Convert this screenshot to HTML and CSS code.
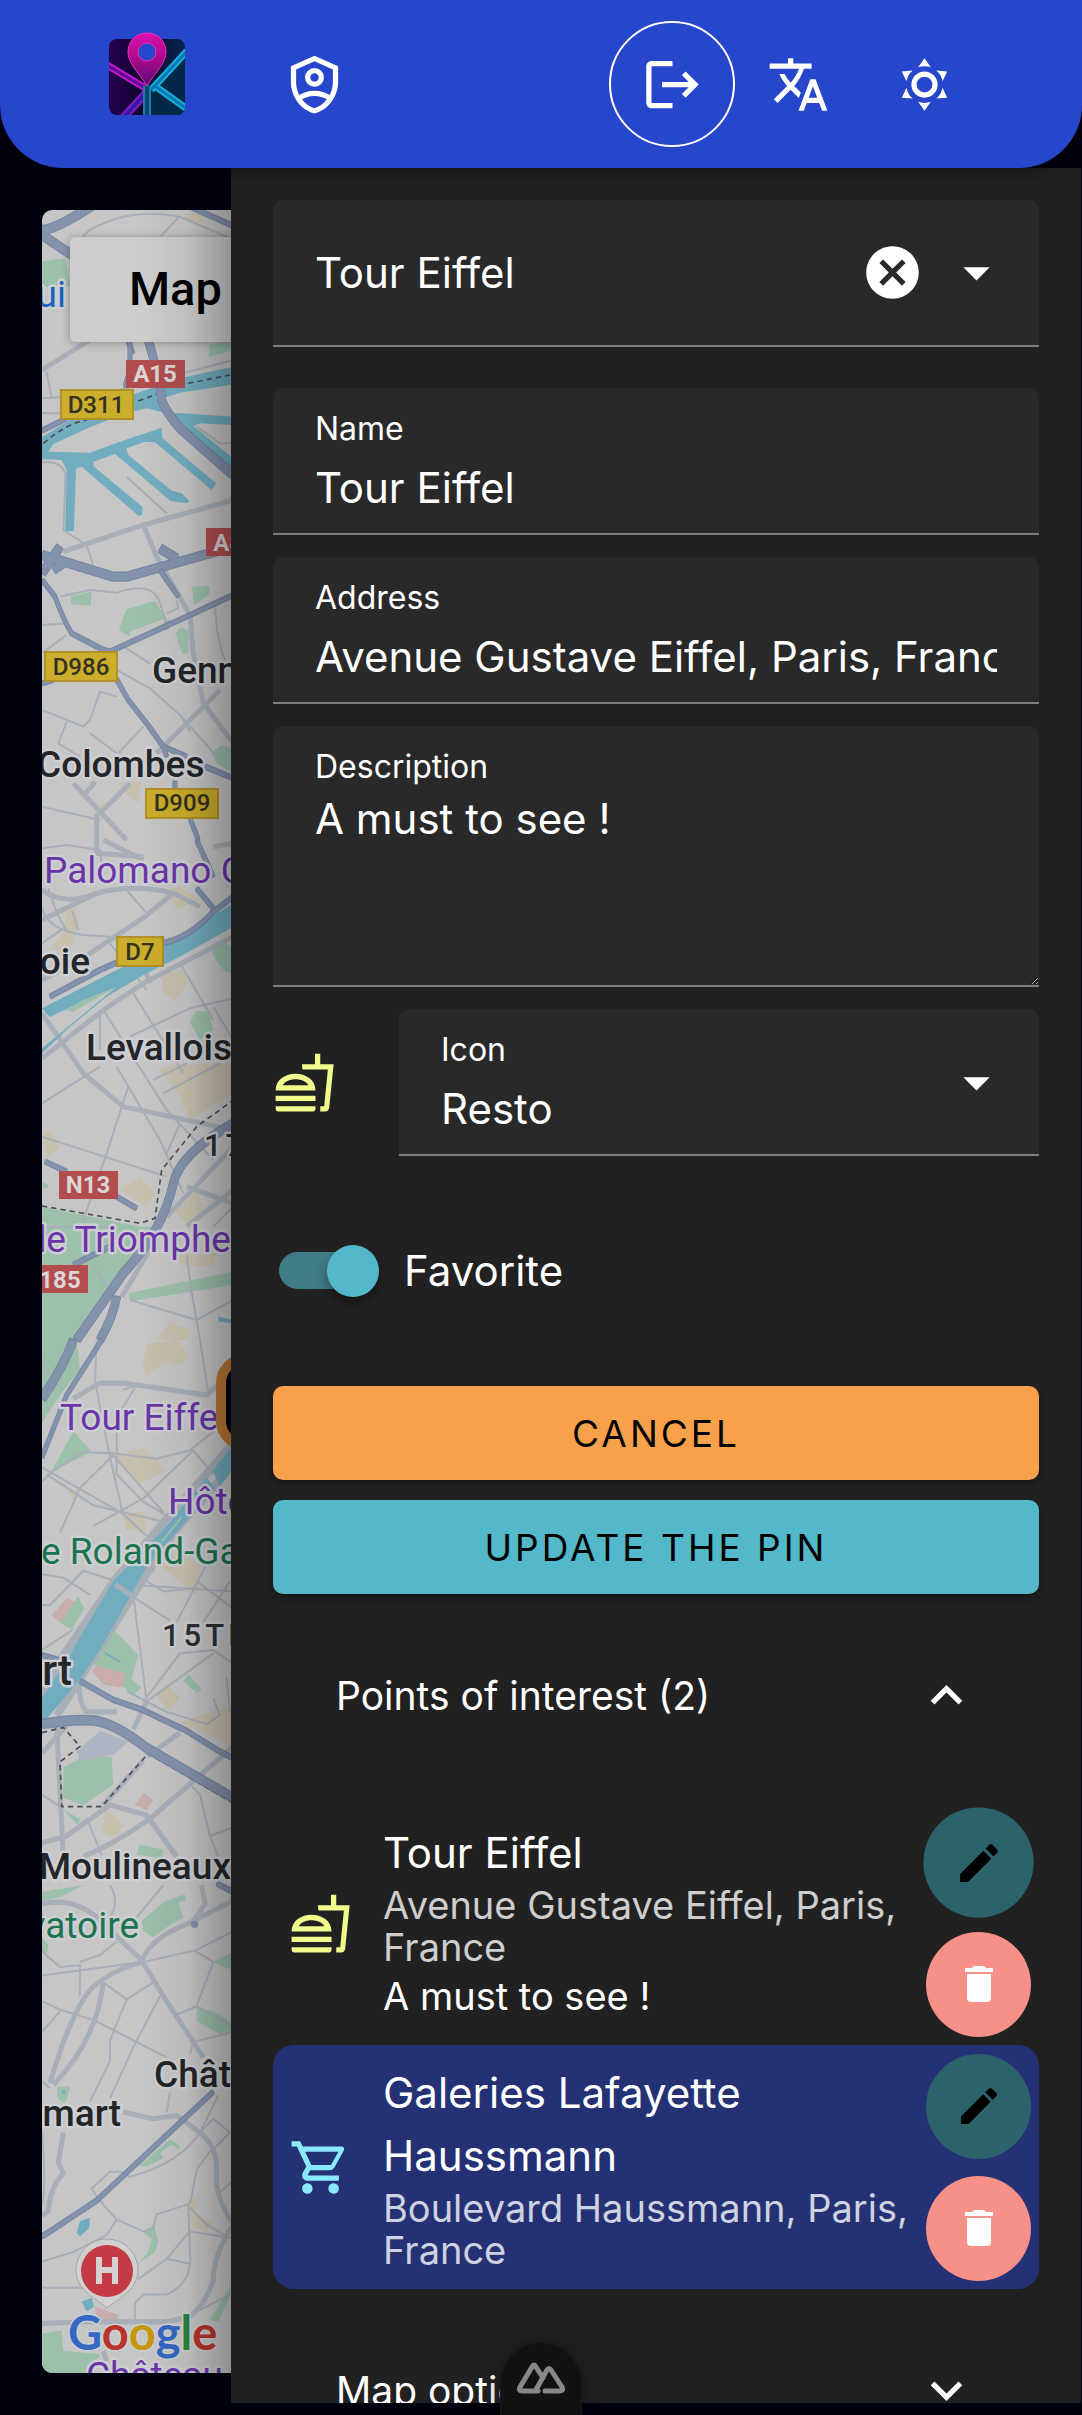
FILE: index.html
```html
<!DOCTYPE html>
<html lang="en">
<head>
<meta charset="utf-8">
<meta name="viewport" content="width=device-width, initial-scale=1">
<title>Map pins</title>
<link rel="stylesheet" href="styles.css">
</head>
<body>
<svg class="defs" aria-hidden="true">
  <symbol id="i-food" viewBox="0 0 24 24"><path d="M16 1H18V5H23.1L21.4 21.6C21.3 22.5 20.7 23 20 23H18V21H19.5L20.9 7H11.2L11 5H16ZM1 21H16.2V22C16.2 22.6 15.8 23 15.2 23H2C1.4 23 1 22.6 1 22ZM1 17H16.2V19H1ZM8.6 8.7C4.8 8.7 1 10.9 1 15H16.2C16.2 10.9 12.4 8.7 8.6 8.7ZM3.7 13C4.6 11.6 6.6 10.8 8.6 10.8S12.6 11.6 13.5 13Z"/></symbol>
  <symbol id="i-cart" viewBox="0 0 24 24"><path d="M17 18A2 2 0 0 1 19 20 2 2 0 0 1 17 22C15.89 22 15 21.1 15 20C15 18.89 15.89 18 17 18M1 2H4.27L5.21 4H20A1 1 0 0 1 21 5C21 5.17 20.95 5.34 20.88 5.5L17.3 11.97C16.96 12.58 16.3 13 15.55 13H8.1L7.2 14.63L7.17 14.75A.25 .25 0 0 0 7.42 15H19V17H7C5.89 17 5 16.1 5 15C5 14.65 5.09 14.32 5.24 14.04L6.6 11.59L3 4H1V2M7 18A2 2 0 0 1 9 20 2 2 0 0 1 7 22C5.89 22 5 21.1 5 20C5 18.89 5.89 18 7 18M16 11L18.78 6H6.14L8.5 11H16Z"/></symbol>
  <symbol id="i-down" viewBox="0 0 24 24"><path d="M7 10L12 15L17 10H7Z"/></symbol>
  <symbol id="i-pencil" viewBox="0 0 24 24"><path d="M20.71 7.04C21.1 6.65 21.1 6 20.71 5.63L18.37 3.29C18 2.9 17.35 2.9 16.96 3.29L15.12 5.12L18.87 8.87M3 17.25V21H6.75L17.81 9.93L14.06 6.18L3 17.25Z"/></symbol>
  <symbol id="i-trash" viewBox="0 0 24 24"><path d="M19 4H15.5L14.5 3H9.5L8.5 4H5V6H19M6 19A2 2 0 0 0 8 21H16A2 2 0 0 0 18 19V7H6V19Z"/></symbol>
</svg>

<header class="topbar">
  <nav class="topbar-side" aria-label="Main">
    <a class="logo" href="#" aria-label="Home">
      <svg viewBox="0 0 76 84" width="76" height="84">
        <defs>
          <clipPath id="tile"><rect y="7" width="76" height="76" rx="8"/></clipPath>
          <linearGradient id="dark" x1="0" x2="1"><stop offset="0" stop-color="#22004f"/><stop offset=".45" stop-color="#12032e"/><stop offset="1" stop-color="#03284d"/></linearGradient>
          <linearGradient id="pin" x1="0" y1="0" x2="0" y2="1"><stop offset="0" stop-color="#dc0fae"/><stop offset=".5" stop-color="#a80a88"/><stop offset="1" stop-color="#560a78"/></linearGradient>
        </defs>
        <g clip-path="url(#tile)" fill="none">
          <rect y="7" width="76" height="76" fill="url(#dark)"/>
          <path d="M38 55L76 19V83H38Z" fill="#02284a"/>
          <path d="M-2 33L38 57" stroke="#c414cf" stroke-width="7"/><path d="M-2 33L38 57" stroke="#5b0c8e" stroke-width="3"/>
          <path d="M38 60L14 86" stroke="#8a17d0" stroke-width="8"/><path d="M38 60L14 86" stroke="#301aa0" stroke-width="4"/>
          <path d="M42 58L78 19M46 54L78 77" stroke="#14b4da" stroke-width="7"/><path d="M42 58L78 19M46 54L78 77" stroke="#0876b4" stroke-width="3"/>
          <path d="M38 54V84" stroke="#1681aa" stroke-width="8"/><path d="M38 52V84" stroke="#114773" stroke-width="4"/>
        </g>
        <path fill="url(#pin)" stroke="#e831bd" d="M38 1C27 1 19 9 19 20C19 31 28 38 38 54C48 38 57 31 57 20C57 9 49 1 38 1Z"/>
        <circle cx="38" cy="20" r="9" fill="#2646cc" stroke="#e831bd"/>
      </svg>
    </a>
    <a class="icon-btn" href="#" aria-label="Admin">
      <svg class="icon" viewBox="0 0 24 24"><path d="M21 11C21 16.55 17.16 21.74 12 23C6.84 21.74 3 16.55 3 11V5L12 1L21 5V11M12 21C15.75 20 19 15.54 19 11.22V6.3L12 3.18L5 6.3V11.22C5 15.54 8.25 20 12 21Z"/><g fill="none" stroke="currentColor" stroke-width="2"><circle cx="12" cy="9.3" r="2.6"/><path d="M6 17.3C9.5 14.7 14.5 14.7 18 17.3"/></g></svg>
    </a>
  </nav>
  <div class="topbar-side">
    <button class="icon-btn ringed" type="button" aria-label="Log out"><svg class="icon" viewBox="0 0 24 24"><path d="M17 7L15.59 8.41L18.17 11H8V13H18.17L15.59 15.58L17 17L22 12M4 5H12V3H4C2.9 3 2 3.9 2 5V19C2 20.1 2.9 21 4 21H12V19H4V5Z"/></svg></button>
    <button class="icon-btn" type="button" aria-label="Language"><svg class="icon" viewBox="0 0 24 24"><path d="M12.87 15.07L10.33 12.56L10.36 12.53C12.1 10.59 13.34 8.36 14.07 6H17V4H10V2H8V4H1V6H12.17C11.5 7.92 10.44 9.75 9 11.35C8.07 10.32 7.3 9.19 6.69 8H4.69C5.42 9.63 6.42 11.17 7.67 12.56L2.58 17.58L4 19L9 14L12.11 17.11L12.87 15.07M18.5 10H16.5L12 22H14L15.12 19H19.87L21 22H23L18.5 10M15.88 17L17.5 12.67L19.12 17H15.88Z"/></svg></button>
    <button class="icon-btn" type="button" aria-label="Theme"><svg class="icon" viewBox="0 0 24 24"><path d="M12 7A5 5 0 0 1 17 12A5 5 0 0 1 12 17A5 5 0 0 1 7 12A5 5 0 0 1 12 7M12 9A3 3 0 0 0 9 12A3 3 0 0 0 12 15A3 3 0 0 0 15 12A3 3 0 0 0 12 9M12 2L14.39 5.42C13.65 5.15 12.84 5 12 5C11.16 5 10.35 5.15 9.61 5.42L12 2M3.34 7L7.5 6.65C6.9 7.16 6.36 7.78 5.94 8.5C5.5 9.24 5.25 10 5.11 10.79L3.34 7M3.36 17L5.12 13.23C5.26 14 5.53 14.78 5.95 15.5C6.37 16.24 6.91 16.86 7.5 17.37L3.36 17M20.65 7L18.88 10.79C18.74 10 18.47 9.23 18.05 8.5C17.63 7.78 17.1 7.15 16.5 6.64L20.65 7M20.64 17L16.5 17.36C17.09 16.85 17.62 16.22 18.04 15.5C18.46 14.77 18.73 14 18.87 13.21L20.64 17M12 22L9.59 18.56C10.33 18.83 11.14 19 12 19C12.82 19 13.63 18.83 14.37 18.56L12 22Z"/></svg></button>
  </div>
</header>

<main class="layout">
  <section class="map" aria-label="Map">
    <svg class="map-art" viewBox="42 210 189 2163" preserveAspectRatio="xMinYMin slice">
      <!-- north -->
      <g transform="scale(.345 .3333)">
        <path class="park" d="M120 785L190 775L205 860H120ZM605 1045L680 1025V1050L605 1070Z"/>
        <path class="shop" d="M540 640H610L570 675L535 655Z"/>
        <path class="rd" d="M230 720L260 690Q380 620 520 650L680 720M520 650L465 710M200 1060L300 1000"/>
        <path class="hw" d="M100 690L215 770M120 690Q160 690 270 615"/>
        <path class="hw2" d="M550 620L680 680M370 1020L385 1060M430 1020L445 1060"/>
      </g>
      <g transform="translate(0 340) scale(.3333)">
        <path class="park" d="M378 808L466 782L496 835L392 874L388 888L357 872ZM213 768L275 755L272 798L213 793ZM574 740L629 738L627 765L582 795L578 755ZM526 880L543 862L566 870L565 938L548 945ZM635 1240L665 1215L700 1225V1300L650 1270ZM627 15L700 0V30L630 40Z"/>
        <path class="shop" d="M280 1400L320 1385L300 1430ZM355 1330L425 1325L415 1390L395 1380Z"/>
        <path class="rd" d="M126 175L300 165L700 60M126 220H180M140 95L155 175M126 367Q180 360 197 400L190 570L260 615L280 675M380 410L500 520M590 260L660 310H700M180 770L270 750L350 758Q460 720 480 790L500 850M500 820L535 805L530 780M126 855L205 850M126 940L200 885M645 795Q650 900 675 960M370 920L450 970M350 990L450 1045L540 1125L660 1260M540 1125L570 1175M126 1110L250 1160L270 1140L300 1055L350 1070M270 1180L350 1240M200 1145L175 1210L240 1250M126 1400L300 1440M355 1240L430 1160"/>
        <path class="rd2" d="M126 90L270 0M190 635L430 555L700 480M430 555L470 650L570 825L580 940L610 1090L700 1210M470 1240L660 1050M220 1330L380 1500M250 1370L285 1325M300 1420L390 1330M290 1420V1500M500 840V870"/>
        <path class="water" d="M126 290L260 210L410 160L540 115L700 80V133L540 158L490 175L520 218L700 230V255L600 250L580 258L700 355V388L560 270L520 225L440 205L370 222L270 262L160 312L145 335L270 338L375 300L484 264L488 295L648 430L635 450L465 307L435 305L380 325L385 345L515 452L545 460L568 482L562 490L512 483L345 342L280 365L280 378L427 500V525L415 527L245 380L228 385L222 573H196L200 390L185 360L126 357Z"/>
        <path class="dash" d="M130 310Q200 250 260 240M415 183L490 155M565 130L690 105"/>
        <path class="hw" d="M445 0Q480 120 485 180Q500 220 540 265L705 410"/>
        <path class="hw" d="M126 645L340 710H380L700 620M126 700L180 620M160 690L190 670M480 625L530 655"/>
        <path class="hw2" d="M390 0V90L375 140M126 272L200 235M126 720L165 770Q190 840 215 880L310 930L330 935L560 830L700 765M345 1010L385 1080L440 1150L490 1220L560 1250M490 1220L500 1250M615 1280L700 1315M525 1325V1345M570 1435L595 1500M480 690L535 770M126 1030L160 1020"/>
      </g>
      <!-- Seine and the western suburbs -->
      <g transform="translate(0 840) scale(.3333)">
        <path class="park" d="M126 1100L420 1160L470 1160L370 1300L240 1500H126ZM628 320L660 300L695 320V400L675 395L650 365ZM570 545L590 512L625 515L640 570L600 600ZM190 510L410 395L350 440L220 515ZM385 1360L700 1295V1335L390 1385ZM126 1025L145 1035V1045H126Z"/>
        <path class="shop" d="M500 150L540 140L600 180L530 210ZM200 210L230 205L235 260L210 330L145 330L190 280ZM485 410L545 388L565 430L525 480L490 460ZM478 690L520 675L700 670V760L570 840L540 770ZM126 880L150 870L180 920L140 955ZM360 1050L420 1010L465 1060L440 1100ZM525 1115L590 1050L615 1110L560 1150ZM530 1245L650 1240L640 1280L540 1275ZM470 1500L510 1445L570 1470L560 1500Z"/>
        <path class="rd" d="M126 25L200 15L300 30L310 110M126 200Q140 270 250 285L330 290M215 210L235 270M145 145Q170 230 200 270M126 310L190 265M380 150L440 220M330 310L440 450M400 460L550 700M310 510L500 810L640 960M540 370L640 540M640 500L700 600M390 590L570 505L700 475M300 520V630M126 790L300 680M460 720L560 670M490 760L660 670M385 740L320 940L250 1140M350 680L480 900L550 1060M126 890L500 1010M500 940L540 850M126 1160H330M280 1280L320 1340M390 1380L590 1440L700 1380M590 1440L600 1500M560 1240Q570 1340 590 1440M640 1160L700 1100"/>
        <path class="rd2" d="M290 0V40L430 50M126 150Q190 200 290 160Q400 130 520 160L600 200M126 240L290 160M520 160L435 230L270 340M126 655L310 510L430 430L700 290M126 520L250 700L370 800L700 870M430 380L450 430M700 920L500 1130M700 1050L560 1160M365 1370L480 1180M560 1040L700 1090M430 60L310 0M640 20L700 10M126 420L270 340"/>
        <path class="water" d="M126 505L350 390L490 315L700 190V260L540 350L430 405L320 470L210 560L126 640V625L290 490L350 440L250 480L150 532ZM655 1430L700 1440V1450L655 1445Z"/>
        <path class="dash" d="M126 1098L420 1150L465 1135L485 990L590 860L700 780"/>
        <path class="hw" d="M700 850Q540 940 520 1030Q490 1170 370 1300L230 1500M350 1370Q340 1430 300 1500"/>
        <path class="hw2" d="M150 470L300 390L480 310Q560 300 640 215L700 170M590 145L640 205M590 0L640 110M135 965L200 995M340 1065L410 1105M220 1275L330 1220"/>
      </g>
      <g transform="translate(0 1340) scale(.3333 .3444)">
        <path class="park" d="M126 0H230L240 85L180 160L126 240ZM220 265L275 325L180 370L150 390ZM180 820L235 745L253 780L215 840ZM270 930L345 845L415 915L395 985L425 1010L400 1030ZM190 1240L250 1210H335L340 1290L250 1350L190 1330ZM190 1365L240 1390L235 1410ZM410 1495L420 1465L490 1480L485 1505ZM550 990L565 970L605 1015L590 1025Z"/>
        <path class="shop" d="M440 10L530 0L570 50L540 75L500 60L440 105L425 80ZM340 340L430 310L500 380L415 420ZM370 510L430 495L440 560L380 550ZM470 650L590 740L600 660L540 600ZM470 1030L500 1000L540 1040L500 1075ZM305 1430L320 1365L375 1410L340 1445ZM540 1110L700 1060V1180ZM205 440L240 430L220 470Z"/>
        <path d="M155 800L200 750L225 760L180 820ZM275 960L290 945L380 970L365 1010L310 1000ZM405 1350L430 1315L460 1335L440 1365Z" fill="#c9acac"/>
        <path d="M230 1195L300 1135L385 1165L340 1205L240 1220Z" fill="#adb4c4"/>
        <path class="rd" d="M126 55L150 110L190 145M290 0L285 120L330 340L370 510M370 145L410 130L360 210M600 0L625 155M126 410L160 380L250 325L350 330L470 345L570 320L700 220M126 370L370 505L440 570M140 390L280 480L500 530M180 560L240 430L340 335L490 500M350 200V390L430 470L500 510M580 320L430 460L280 540M580 320L640 390M126 680L190 690L270 740M126 770H150L250 670L380 710L700 730M400 740L440 1050M390 740L510 815M530 820L620 650M590 700L700 780M440 700L490 730L590 720M610 820L690 700M430 1050L540 910L640 900L700 940M440 1050L640 910M680 980L690 1080M380 1020L500 1080L620 1115L660 1090L640 1040M570 1290L600 1320L630 1440L655 1500M630 1440L700 1415M265 1400L305 1495M126 1320L180 1355M126 900L220 840"/>
        <path class="rd2" d="M220 170L300 125H370L620 160L700 90M240 960Q230 1050 260 1080L350 1080M170 1120L190 1500M126 1460L200 1440L330 1350L440 1380L530 1500M250 1500Q350 1460 450 1390L700 1180M126 1200L200 1120M440 1050L400 1130M440 1210L540 1140M430 1220L310 1350"/>
        <path d="M700 300L500 520L350 690L180 930L126 1040M720 340L520 560L400 740L170 1090" fill="none" stroke="#a9afb7" stroke-width="24"/>
        <path class="water" d="M638 380L700 305V370L660 425ZM620 400L645 430L500 590L440 660L300 900L240 985L140 1100H126V1040L180 960L340 700L500 540ZM315 905L365 935H355L315 912Z"/>
        <path d="M485 585L545 515" stroke="#9dc0ab" stroke-width="6"/>
        <path class="rd2" d="M345 710L400 745"/>
        <path class="dash" d="M126 1140L190 1125L240 1180L180 1225L185 1355H305L445 1200L700 1345"/>
        <path class="hw" d="M220 0Q190 80 126 170M126 1115Q220 1100 280 1105Q340 1110 440 1185L700 1330"/>
        <path class="hw2" d="M305 0L200 160L126 340M240 990L340 1045L430 1075L560 1135L660 1195L700 1215M126 915L180 930"/>
      </g>
      <!-- southern suburbs -->
      <g transform="translate(0 1880) scale(.3333 .3412)">
        <path class="park" d="M126 35L250 15L180 50L126 62ZM425 120L490 65L555 42L558 60L535 65L550 110L505 135L460 168L430 150ZM640 240L700 210V265L660 250ZM590 375L640 385L700 420V440L660 452L590 415ZM172 605H212L195 655L172 640ZM415 840L510 760L542 780L535 790L515 775L480 800L490 815L440 840ZM430 1035L462 1010L475 1060L465 1090L415 1125L445 1090L455 1050ZM126 1330L185 1320L190 1380L300 1390L270 1450H126ZM630 1290L690 1190V1220L655 1295ZM126 170L145 190L140 220L126 210Z"/>
        <path class="shop" d="M560 930L590 935L585 980L635 1000L630 1025L580 1020L570 960Z"/>
        <path d="M285 1250L355 1275L350 1300L290 1290Z" fill="#c9acac"/>
        <path class="rd" d="M330 15Q360 60 330 110M490 15L410 110M126 210L180 255L240 250V340M240 240L300 220L350 180M310 300L380 350L460 300M480 340L400 490L330 640M380 350L330 470V530L270 650M126 355L180 380L280 410L500 520M126 445L180 385M530 395L590 370L640 240L580 205M590 370L700 430M570 510L580 475L700 445M126 590L150 610M510 625L500 680M655 630L600 740Q540 830 390 870L360 855H330L275 905L300 940L350 995L430 1030L460 1020L470 980L565 950L570 1090Q580 1180 500 1215H430L405 1240V1290M350 995L320 1040L220 1090L126 1118M126 1195H250M570 960L620 1010L700 1055M570 1030L700 1050M700 880L655 920M415 1170L500 1110L570 1030M500 1110L570 1125M700 1210L600 1260M640 780L590 850L570 950M600 740L640 700L690 740M690 740L640 790M126 740Q140 900 126 950"/>
        <path class="rd" d="M126 280L430 240L590 205L700 150"/>
        <path class="rd2" d="M126 70Q220 50 290 110L425 235L490 340L610 520M425 240Q450 170 560 130L700 60M605 15L615 70L580 120M425 240Q290 280 250 350Q200 430 150 595M310 300Q290 470 160 600M190 740L175 830L190 860Q150 900 145 970L126 985M370 680L460 700L530 690L600 740Q650 780 650 850Q640 920 700 1010Q640 1100 640 1170Q620 1240 570 1280L500 1295H250L126 1300M310 1380L320 1410"/>
        <path class="water" d="M240 1000L270 990L268 1020L240 1045L230 1035ZM245 1235L275 1225L282 1250L260 1265ZM186 617H195V628H186Z"/>
        <path class="hw2" d="M640 620L290 940L126 1045M650 10L700 35"/>
        <circle cx="584" cy="130" r="11" fill="#8592ab"/>
      </g>

      <!-- road shields -->
      <g class="shield red"><rect x="126" y="360" width="59" height="28"/><text x="155" y="382">A15</text><rect x="206" y="528" width="59" height="28"/><text x="235" y="551">A86</text><rect x="59" y="1171" width="59" height="28"/><text x="88" y="1193">N13</text><rect x="29" y="1265" width="59" height="28"/><text x="60" y="1288">185</text></g>
      <g class="shield yellow"><rect x="61" y="390" width="72" height="29"/><text x="96" y="413">D311</text><rect x="45" y="652" width="72" height="29"/><text x="81" y="675">D986</text><rect x="146" y="789" width="72" height="29"/><text x="182" y="811">D909</text><rect x="117" y="937" width="46" height="29"/><text x="140" y="960">D7</text></g>

      <!-- place names -->
      <g class="place">
        <text class="blue" x="66" y="307" text-anchor="end">qui</text>
        <text class="town" x="152" y="683">Gennevilliers</text>
        <text class="town" x="37" y="777">Colombes</text>
        <text class="poi" x="44" y="883">Palomano Café</text>
        <text class="town" x="90" y="974" text-anchor="end">Courbevoie</text>
        <text class="town" x="86" y="1060">Levallois</text>
        <text class="district" x="204" y="1156">17TH</text>
        <text class="poi" x="231" y="1252" text-anchor="end">Arc de Triomphe</text>
        <text class="poi" x="60" y="1430">Tour Eiffel</text>
        <text class="poi" x="168" y="1514">Hôtel</text>
        <text class="green" x="41" y="1564">e Roland-Garros</text>
        <text class="district" x="162" y="1646">15TH</text>
        <text class="city" x="72" y="1685" text-anchor="end">court</text>
        <text class="town" x="231" y="1879" text-anchor="end">Moulineaux</text>
        <text class="green" x="139" y="1938" text-anchor="end">Observatoire</text>
        <text class="town" x="154" y="2087">Châtillon</text>
        <text class="town" x="121" y="2126" text-anchor="end">Clamart</text>
        <text class="poi" x="86" y="2388">Château</text>
      </g>

      <path d="M107 2308C95 2298 76 2290 76 2270A31 31 0 1 1 138 2270C138 2290 119 2298 107 2308Z" fill="#d0d0d0" stroke="#a5a5a5"/>
      <circle cx="107" cy="2271" r="26" fill="#c53b45"/>
      <path d="M99 2257V2284M115 2257V2284M99 2270H115" stroke="#d6d0d0" stroke-width="6"/>
      <rect x="221" y="1359" width="90" height="86" rx="24" fill="#00020e" stroke="#b87734" stroke-width="10"/>
      <text class="brand" x="68" y="2350"><tspan fill="#3568c4">G</tspan><tspan fill="#b8342c">o</tspan><tspan fill="#c69709">o</tspan><tspan fill="#3568c4">g</tspan><tspan fill="#2c8442">l</tspan><tspan fill="#b8342c">e</tspan></text>
    </svg>
    <button class="map-type" type="button">Map</button>
  </section>

  <aside class="drawer">
    <form class="form">
      <div class="field plain">
        <select class="value" aria-label="Place"><option>Tour Eiffel</option></select>
        <button class="clear" type="button" aria-label="Clear"><svg class="icon" viewBox="0 0 24 24"><path d="M12 2C17.53 2 22 6.47 22 12C22 17.53 17.53 22 12 22C6.47 22 2 17.53 2 12C2 6.47 6.47 2 12 2M15.59 7L12 10.59L8.41 7L7 8.41L10.59 12L7 15.59L8.41 17L12 13.41L15.59 17L17 15.59L13.41 12L17 8.41L15.59 7Z"/></svg></button>
        <svg class="icon arrow"><use href="#i-down"/></svg>
      </div>
      <div class="field">
        <label for="name">Name</label>
        <input class="value" id="name" type="text" value="Tour Eiffel">
      </div>
      <div class="field">
        <label for="address">Address</label>
        <input class="value" id="address" type="text" value="Avenue Gustave Eiffel, Paris, France">
      </div>
      <div class="field area">
        <label for="description">Description</label>
        <textarea class="value" id="description">A must to see !</textarea>
      </div>
      <div class="icon-row">
        <svg class="icon food"><use href="#i-food"/></svg>
        <div class="field">
          <label for="icon">Icon</label>
          <select class="value" id="icon"><option>Resto</option></select>
          <svg class="icon arrow over"><use href="#i-down"/></svg>
        </div>
      </div>
      <label class="switch"><input type="checkbox" role="switch" checked>Favorite</label>
      <div class="actions">
        <button class="btn cancel" type="button">CANCEL</button>
        <button class="btn update" type="submit">UPDATE THE PIN</button>
      </div>
    </form>

    <button class="panel-title" type="button" aria-expanded="true">Points of interest (2)<svg class="icon" viewBox="0 0 24 24"><path d="M7.41 15.41L12 10.83L16.59 15.41L18 14L12 8L6 14L7.41 15.41Z"/></svg></button>
    <ul class="pins">
      <li class="pin">
        <svg class="icon food"><use href="#i-food"/></svg>
        <div class="pin-text"><h3>Tour Eiffel</h3><p class="addr">Avenue Gustave Eiffel, Paris, France</p><p>A must to see !</p></div>
        <div class="pin-actions">
          <button class="round edit active" type="button" aria-label="Edit"><svg><use href="#i-pencil"/></svg></button>
          <button class="round remove" type="button" aria-label="Delete"><svg><use href="#i-trash"/></svg></button>
        </div>
      </li>
      <li class="pin selected">
        <svg class="icon cart"><use href="#i-cart"/></svg>
        <div class="pin-text"><h3>Galeries Lafayette Haussmann</h3><p class="addr">Boulevard Haussmann, Paris, France</p></div>
        <div class="pin-actions">
          <button class="round edit" type="button" aria-label="Edit"><svg><use href="#i-pencil"/></svg></button>
          <button class="round remove" type="button" aria-label="Delete"><svg><use href="#i-trash"/></svg></button>
        </div>
      </li>
    </ul>
    <button class="panel-title" type="button" aria-expanded="false">Map options<svg class="icon" viewBox="0 0 24 24"><path d="M7.41 8.58L12 13.17L16.59 8.58L18 10L12 16L6 10L7.41 8.58Z"/></svg></button>
  </aside>
</main>

<button class="devtools" type="button" aria-label="Developer tools">
  <svg viewBox="0 0 48 32" width="48" height="32"><path d="M21 29H5Q1 29 3 25L15 5Q17 1 19 5L26 16M28 29H43Q47 29 45 25L34 8Q32 5 30 8L20 26Q18 29 21 29" /></svg>
</button>
</body>
</html>
```

FILE: styles.css
```css
* { box-sizing: border-box; }

body {
  margin: 0;
  height: 100vh;
  display: flex;
  flex-direction: column;
  overflow: hidden;
  background: #00020e;
  color: #fff;
  font-family: Inter, "Liberation Sans", sans-serif;
  font-size: 42px;
}

button, input, select, textarea {
  margin: 0;
  padding: 0;
  border: 0;
  background: none;
  color: inherit;
  font: inherit;
}

h3, p, ul { margin: 0; padding: 0; font-weight: 400; }
.defs { display: none; }

.icon {
  flex: none;
  display: block;
  width: 63px;
  height: 63px;
  fill: currentColor;
}

/* Top bar */
.topbar {
  flex: none;
  position: relative;
  z-index: 2;
  height: 168px;
  padding: 0 95px;
  display: flex;
  align-items: center;
  justify-content: space-between;
  border-radius: 0 0 63px 63px;
  background: #2646cc;
  box-shadow: 0 6px 16px rgba(0, 0, 0, .35);
}
.topbar-side { display: flex; align-items: center; }
.topbar-side:first-child { gap: 54px; padding-left: 14px; }
.logo { width: 88px; height: 84px; margin-top: -20px; }
.logo svg { display: block; }
.icon-btn {
  width: 126px;
  height: 126px;
  display: flex;
  align-items: center;
  justify-content: center;
  border-radius: 50%;
  color: #fff;
}
.ringed { border: 2px solid #fff; }

/* Map */
.layout { flex: 1; min-height: 0; display: flex; }
.map {
  position: relative;
  flex: 1;
  margin: 42px 0 42px 42px;
  border-radius: 10px 0 0 10px;
  overflow: hidden;
  background: #c6c6c6;
  font-family: Roboto, sans-serif;
}
.map::after {
  content: "";
  position: absolute;
  inset: 0 0 0 auto;
  width: 90px;
  background: linear-gradient(90deg, transparent, rgba(0, 0, 0, .06) 50%, rgba(0, 0, 0, .28));
  pointer-events: none;
}
.map-art { display: block; width: 100%; height: 100%; }
.park { fill: #9dc0ab; }
.shop { fill: #c8c0ae; }
.water { fill: #72adbf; }
.rd, .rd2 { fill: none; stroke: #a8afb8; stroke-width: 6; stroke-linejoin: round; }
.rd2 { stroke-width: 15; }
.hw, .hw2 { fill: none; stroke: #8493ac; stroke-width: 25; stroke-linejoin: round; filter: drop-shadow(0 -2px #65749a) drop-shadow(0 2px #65749a); }
.hw2 { stroke-width: 13; }
.dash { fill: none; stroke: #4b5054; stroke-width: 5; stroke-dasharray: 16 12; }
.shield { font-size: 24px; text-anchor: middle; }
.red rect { fill: #b14d4e; }
.red text { fill: #dcd5d5; font-weight: 700; }
.yellow rect { fill: #cbae2b; stroke: #b29029; stroke-width: 2; }
.yellow text { fill: #33311f; font-weight: 500; }
.place { font-size: 37px; stroke: #cdcfd2; stroke-width: 5; stroke-linejoin: round; }
.place text { paint-order: stroke; }
.town { fill: #232529; font-weight: 500; }
.city { fill: #232529; font-weight: 500; font-size: 42px; }
.district { fill: #2c3033; font-size: 31px; font-weight: 500; letter-spacing: 4px; }
.poi { fill: #6a35a8; }
.green { fill: #1c7350; }
.blue { fill: #1b62bd; }
.brand { font-family: Lato, sans-serif; font-size: 47px; font-weight: 700; paint-order: stroke; stroke: #cdcfd2; stroke-width: 3; }
.map-type {
  position: absolute;
  top: 27px;
  left: 28px;
  height: 105px;
  padding: 0 60px 2px 59px;
  border-radius: 5px;
  background: #cdcdcd;
  box-shadow: 0 1px 8px rgba(0, 0, 0, .3);
  color: #000;
  font-size: 47px;
  font-weight: 500;
}

/* Drawer */
.drawer {
  width: min(850px, 79%);
  margin: 0 1px 12px 0;
  padding: 32px 42px 0;
  overflow: hidden;
  background: #212121;
}
.form { display: flex; flex-direction: column; gap: 22px; }
.field {
  position: relative;
  flex: 1;
  min-width: 0;
  height: 147px;
  padding: 20px 42px 0;
  display: flex;
  flex-direction: column;
  border-bottom: 2px solid #7c7c7c;
  border-radius: 10px 10px 0 0;
  background: #292929;
}
.form > .field { flex: none; }
.field label { font-size: 32px; line-height: 42px; margin-bottom: 7px; }
.value {
  width: 100%;
  height: 62px;
  line-height: 62px;
  appearance: none;
  outline: 0;
}
.field.plain {
  flex-direction: row;
  align-items: center;
  padding: 0 31px 0 42px;
  margin-bottom: 19px;
}
.plain .value { flex: 1; }
.clear { margin-right: 21px; }
.arrow.over {
  position: absolute;
  top: 42px;
  right: 31px;
  pointer-events: none;
}
.field.area { height: 261px; padding-right: 0; }
.field.area label { margin: 0; }
.area .value { flex: 1; resize: vertical; }
.icon-row { display: flex; align-items: center; gap: 63px; }
.food { color: #f0fb8c; }
.cart { color: #8be9fd; }

.switch {
  height: 147px;
  margin-top: 19px;
  padding-left: 6px;
  display: flex;
  align-items: center;
  gap: 25px;
}
.switch input {
  position: relative;
  appearance: none;
  width: 100px;
  height: 37px;
}
.switch input::before {
  content: "";
  display: block;
  width: 94px;
  height: 37px;
  border-radius: 19px;
  background: #407c86;
}
.switch input::after {
  content: "";
  position: absolute;
  top: -7px;
  right: 0;
  width: 52px;
  height: 52px;
  border-radius: 50%;
  background: #53b8c9;
  box-shadow: 0 6px 12px rgba(0, 0, 0, .35);
}

.actions { display: grid; gap: 20px; margin-top: 20px; }
.btn {
  height: 94px;
  border-radius: 10px;
  box-shadow: 0 4px 6px rgba(0, 0, 0, .3);
  color: #000;
  font-size: 37px;
  letter-spacing: 3px;
}
.cancel { background: #f7a24b; }
.update { background: #53b8c9; }

.panel-title {
  width: 100%;
  height: 168px;
  margin-top: 18px;
  padding: 0 61px 2px 63px;
  display: flex;
  align-items: center;
  justify-content: space-between;
  font-size: 39px;
}

/* Saved pins */
.pins { margin-top: 21px; list-style: none; }
.pin {
  min-height: 244px;
  padding: 0 8px 0 16px;
  display: flex;
  align-items: center;
  border-radius: 21px;
}
.selected { background: #243275; }
.pin-text { flex: 1; min-width: 0; padding: 0 0 2px 31px; }
.pin h3 { font-size: 42px; line-height: 63px; }
.pin p { font-size: 38px; line-height: 56px; }
.pin .addr { line-height: 42px; color: rgba(255, 255, 255, .78); }
.pin-actions { display: grid; gap: 17px; }
.round {
  width: 105px;
  height: 105px;
  display: grid;
  place-items: center;
  border-radius: 50%;
}
.round svg { width: 48px; height: 48px; fill: currentColor; }
.edit { background: #2c626a; color: #000; }
.active { transform: scale(1.05); }
.remove { background: #f79088; color: #fff; }

.devtools {
  position: fixed;
  z-index: 3;
  bottom: 0;
  left: 50%;
  width: 82px;
  height: 73px;
  padding-bottom: 3px;
  display: grid;
  place-items: center;
  transform: translateX(-50%);
  border: 1px solid #1b1b1b;
  border-bottom: 0;
  border-radius: 41px 41px 0 0;
  background: #111;
  box-shadow: 0 0 26px rgba(0, 0, 0, .4);
}
.devtools path { fill: none; stroke: #888; stroke-width: 5; stroke-linecap: round; stroke-linejoin: round; }
```
